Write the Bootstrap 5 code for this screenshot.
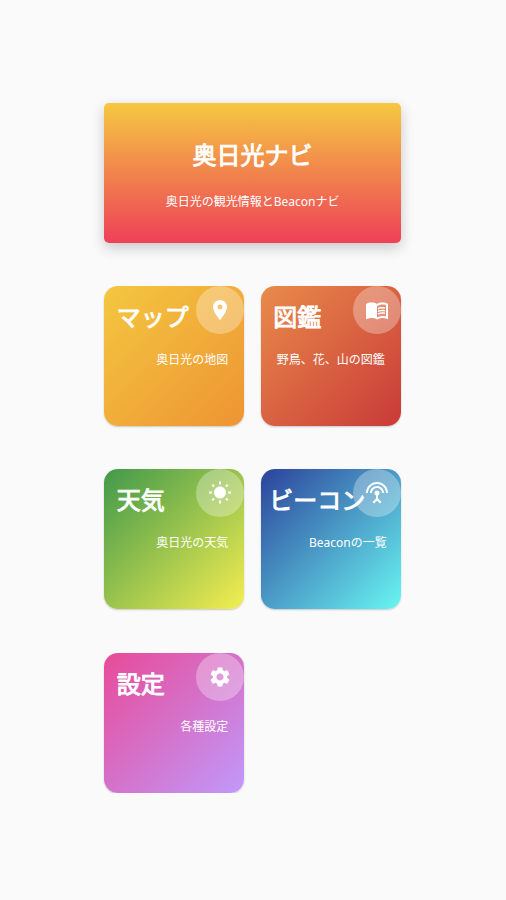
<!DOCTYPE html>
<html lang="ja">
<head>
<meta charset="utf-8">
<meta name="viewport" content="width=device-width, initial-scale=1">
<title>奥日光ナビ</title>
<link rel="stylesheet" href="https://cdn.jsdelivr.net/npm/bootstrap@5.3.0/dist/css/bootstrap.min.css">
<style>
body { background: #fafafa; font-family: "Noto Sans", "Noto Sans CJK JP", sans-serif; }
.menu { width: 296.5px; margin-left: 104.3px; padding-top: 103px; }
.hero { height: 140px; border-radius: 5px; background: linear-gradient(#f5c842, #ee4058); box-shadow: 0 5px 14px rgba(0,0,0,.2); padding-top: 34px; }
.heading { font-size: 24px; line-height: 36px; font-weight: 400; -webkit-text-stroke: .9px #fff; white-space: nowrap; }
.caption { font-size: 12px; line-height: 18px; white-space: nowrap; }
.hero .caption { margin-top: 20px; }
.tiles { grid-template-columns: 140px 140px; column-gap: 16.5px; row-gap: 43.4px; margin-top: 43px; }
.tile { height: 140px; border-radius: 14px; padding: 13px 16px 0 12.5px; box-shadow: 0 1px 2px rgba(0,0,0,.2); }
.tile .caption { margin-top: 15.7px; }
.bubble { width: 48px; height: 48px; background: rgba(255,255,255,.3); }
.bubble svg { width: 24px; height: 24px; fill: #fff; }
.tile-map { background: linear-gradient(135deg, #f4c740, #ee9433); }
.tile-book { background: linear-gradient(135deg, #e98b4a, #c93a38); }
.tile-weather { background: linear-gradient(135deg, #40994b, #f4ee50); }
.tile-beacon { background: linear-gradient(135deg, #2c429b, #69f6f2); padding-left: 8.5px; padding-right: 14px; }
.tile-settings { background: linear-gradient(135deg, #e84a98, #c199fb); }
.tile-settings .caption { margin-top: 16.2px; }
</style>
</head>
<body>
<main class="menu">
  <header class="hero text-white text-center">
    <h1 class="heading mb-0">奥日光ナビ</h1>
    <p class="caption mb-0">奥日光の観光情報とBeaconナビ</p>
  </header>
  <section class="tiles d-grid">
    <article class="tile tile-map position-relative text-white">
      <h2 class="heading mb-0">マップ</h2>
      <p class="caption mb-0 text-end">奥日光の地図</p>
      <span class="bubble position-absolute top-0 end-0 rounded-circle d-flex align-items-center justify-content-center"><svg viewBox="0 0 24 24"><path d="M12 2C8.13 2 5 5.13 5 9c0 5.25 7 13 7 13s7-7.75 7-13c0-3.87-3.13-7-7-7zm0 9.5a2.5 2.5 0 0 1 0-5 2.5 2.5 0 0 1 0 5z"/></svg></span>
    </article>
    <article class="tile tile-book position-relative text-white">
      <h2 class="heading mb-0">図鑑</h2>
      <p class="caption mb-0 text-end">野鳥、花、山の図鑑</p>
      <span class="bubble position-absolute top-0 end-0 rounded-circle d-flex align-items-center justify-content-center"><svg viewBox="0 0 24 24"><path d="M21 5c-1.11-.35-2.33-.5-3.5-.5-1.95 0-4.05.4-5.5 1.5-1.45-1.1-3.55-1.5-5.5-1.5S2.45 4.9 1 6v14.65c0 .25.25.5.5.5.1 0 .15-.05.25-.05C3.1 20.45 5.05 20 6.5 20c1.95 0 4.05.4 5.5 1.5 1.35-.85 3.8-1.5 5.5-1.5 1.65 0 3.35.3 4.75 1.05.1.05.15.05.25.05.25 0 .5-.25.5-.5V6c-.6-.45-1.25-.75-2-1zm0 13.5c-1.1-.35-2.3-.5-3.5-.5-1.7 0-4.15.65-5.5 1.5V8c1.35-.85 3.8-1.5 5.5-1.5 1.2 0 2.4.15 3.5.5v11.5z"/><path d="M17.5 10.5c.88 0 1.73.09 2.5.26V9.24c-.79-.15-1.64-.24-2.5-.24-1.7 0-3.24.29-4.5.83v1.66c1.13-.64 2.7-.99 4.5-.99zM13 12.49v1.66c1.13-.64 2.7-.99 4.5-.99.88 0 1.73.09 2.5.26V11.9c-.79-.15-1.64-.24-2.5-.24-1.7 0-3.24.3-4.5.83zM17.5 14.33c-1.7 0-3.24.29-4.5.83v1.66c1.13-.64 2.7-.99 4.5-.99.88 0 1.73.09 2.5.26v-1.52c-.79-.16-1.64-.24-2.5-.24z"/></svg></span>
    </article>
    <article class="tile tile-weather position-relative text-white">
      <h2 class="heading mb-0">天気</h2>
      <p class="caption mb-0 text-end">奥日光の天気</p>
      <span class="bubble position-absolute top-0 end-0 rounded-circle d-flex align-items-center justify-content-center"><svg viewBox="0 0 24 24"><path d="M6.76 4.84l-1.8-1.79-1.41 1.41 1.79 1.79 1.42-1.41zM4 10.5H1v2h3v-2zm9-9.95h-2V3.5h2V.55zm7.45 3.91l-1.41-1.41-1.79 1.79 1.41 1.41 1.79-1.79zm-3.21 13.7l1.79 1.8 1.41-1.41-1.8-1.79-1.4 1.4zM20 10.5v2h3v-2h-3zm-8-5c-3.31 0-6 2.69-6 6s2.69 6 6 6 6-2.69 6-6-2.69-6-6-6zm-1 16.95h2V19.5h-2v2.95zm-7.45-3.91l1.41 1.41 1.79-1.8-1.41-1.41-1.79 1.8z"/></svg></span>
    </article>
    <article class="tile tile-beacon position-relative text-white">
      <h2 class="heading mb-0">ビーコン</h2>
      <p class="caption mb-0 text-end">Beaconの一覧</p>
      <span class="bubble position-absolute top-0 end-0 rounded-circle d-flex align-items-center justify-content-center"><svg viewBox="0 0 24 24"><path d="M12 5c-3.87 0-7 3.13-7 7h2c0-2.76 2.24-5 5-5s5 2.24 5 5h2c0-3.87-3.13-7-7-7zm1 9.29c.88-.39 1.5-1.26 1.5-2.29a2.5 2.5 0 0 0-5 0c0 1.02.62 1.9 1.5 2.29v3.3L7.59 21 9 22.41l3-3 3 3L16.41 21 13 17.59v-3.3zM12 1C5.93 1 1 5.93 1 12h2c0-4.97 4.03-9 9-9s9 4.03 9 9h2c0-6.07-4.93-11-11-11z"/></svg></span>
    </article>
    <article class="tile tile-settings position-relative text-white">
      <h2 class="heading mb-0">設定</h2>
      <p class="caption mb-0 text-end">各種設定</p>
      <span class="bubble position-absolute top-0 end-0 rounded-circle d-flex align-items-center justify-content-center"><svg viewBox="0 0 24 24"><path d="M19.14 12.94c.04-.3.06-.61.06-.94 0-.32-.02-.64-.07-.94l2.03-1.58c.18-.14.23-.41.12-.61l-1.92-3.32c-.12-.22-.37-.29-.59-.22l-2.39.96c-.5-.38-1.03-.7-1.62-.94l-.36-2.54c-.04-.24-.24-.41-.48-.41h-3.84c-.24 0-.43.17-.47.41l-.36 2.54c-.59.24-1.13.57-1.62.94l-2.39-.96c-.22-.08-.47 0-.59.22L2.74 8.87c-.12.21-.08.47.12.61l2.03 1.58c-.05.3-.09.63-.09.94s.02.64.07.94l-2.03 1.58c-.18.14-.23.41-.12.61l1.92 3.32c.12.22.37.29.59.22l2.39-.96c.5.38 1.03.7 1.62.94l.36 2.54c.05.24.24.41.48.41h3.84c.24 0 .44-.17.47-.41l.36-2.54c.59-.24 1.13-.56 1.62-.94l2.39.96c.22.08.47 0 .59-.22l1.92-3.32c.12-.22.07-.47-.12-.61l-2.01-1.58zM12 15.6c-1.98 0-3.6-1.62-3.6-3.6s1.62-3.6 3.6-3.6 3.6 1.62 3.6 3.6-1.62 3.6-3.6 3.6z"/></svg></span>
    </article>
  </section>
</main>
<script src="https://cdn.jsdelivr.net/npm/bootstrap@5.3.0/dist/js/bootstrap.bundle.min.js"></script>
</body>
</html>
